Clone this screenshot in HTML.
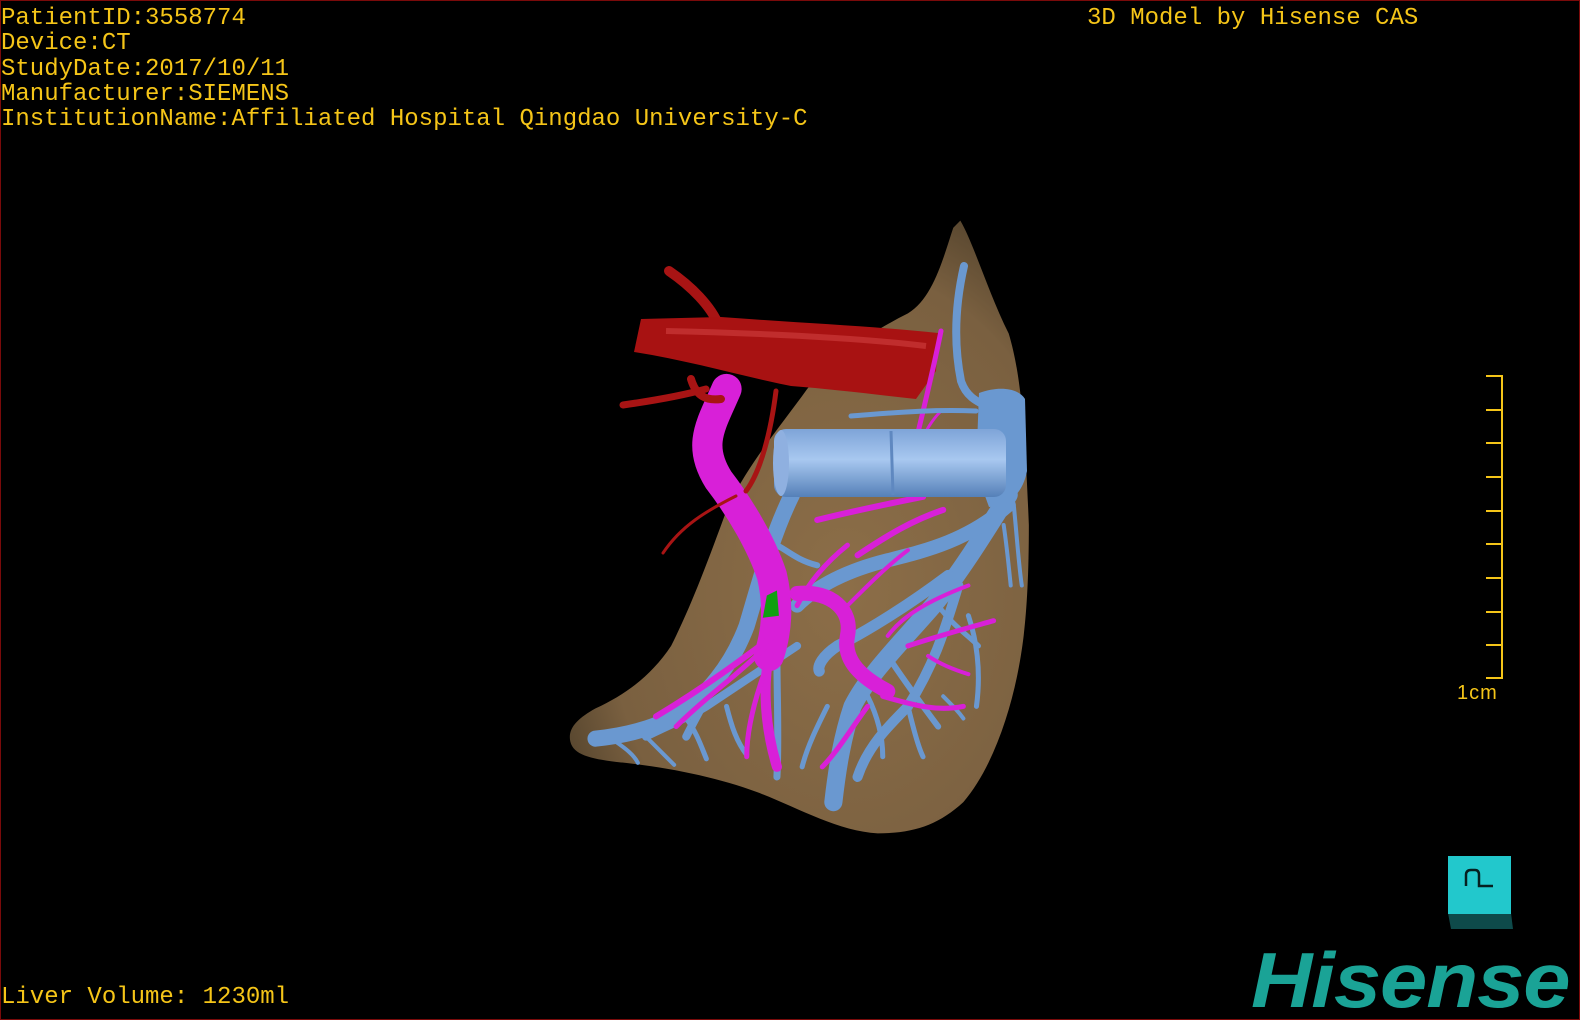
<!DOCTYPE html>
<html><head><meta charset="utf-8"><style>
html,body{margin:0;padding:0;background:#000;}
#root{position:relative;width:1578px;height:1018px;border:1px solid #7a0a0a;background:#000;overflow:hidden;}
.t{position:absolute;font-family:"Liberation Mono",monospace;font-size:24px;color:#f5c518;white-space:pre;line-height:25.3px;}
.tick{position:absolute;left:1485px;width:16px;height:2px;background:#f5c518;}
</style></head><body><div id="root">
<div class="t" style="left:0;top:5px;">PatientID:3558774
Device:CT
StudyDate:2017/10/11
Manufacturer:SIEMENS
InstitutionName:Affiliated Hospital Qingdao University-C</div>
<div class="t" style="left:1086px;top:5px;">3D Model by Hisense CAS</div>
<div class="t" style="left:0;top:984px;">Liver Volume: 1230ml</div>

<svg style="position:absolute;left:0;top:0" width="1580" height="1020">
<defs>
<radialGradient id="lv" cx="0.6" cy="0.6" r="0.65"><stop offset="0" stop-color="#8c6e48"/><stop offset="0.8" stop-color="#7a6040"/><stop offset="1" stop-color="#5a4830"/></radialGradient>
<linearGradient id="cy" x1="0" y1="0" x2="0" y2="1"><stop offset="0" stop-color="#7ea4d8"/><stop offset="0.45" stop-color="#a8c8f0"/><stop offset="1" stop-color="#5580b8"/></linearGradient>
</defs>
<g transform="scale(1.0077)">
<path d="M952,218 C965,240 980,290 1000,330 C1012,370 1016,420 1020,520 C1020,580 1017,620 1012,650 C1004,700 985,760 955,795 C930,818 905,826 870,826 C830,824 790,800 750,785 C710,770 660,760 610,755 C585,752 568,748 565,735 C562,722 572,712 590,702 C620,688 645,670 665,640 C685,600 700,560 722,500 C745,455 775,420 800,385 C825,355 860,330 900,310 C925,295 935,255 945,225 Z" fill="url(#lv)"/>
<g stroke="#6a98d0" fill="none" stroke-linecap="round" stroke-linejoin="round">
<path d="M785,490 C765,530 752,580 740,620 C725,660 700,690 670,710 C640,725 610,730 590,732" stroke-width="16"/>
<path d="M740,615 C720,660 700,690 680,730" stroke-width="8"/>
<path d="M1000,490 C975,530 950,570 925,600 C890,640 860,670 845,700 C835,730 830,760 826,795" stroke-width="18"/>
<path d="M1000,500 C960,535 920,545 880,555 C840,565 810,580 790,600" stroke-width="14"/>
<path d="M940,570 C900,600 860,625 830,640 C815,650 810,660 812,665" stroke-width="11"/>
<path d="M950,580 C935,630 925,660 900,700 C880,720 860,740 850,770" stroke-width="10"/>
<path d="M880,650 C900,680 915,700 930,720" stroke-width="6"/>
<path d="M810,560 C790,555 780,545 770,540" stroke-width="6"/>
<path d="M790,640 C760,660 730,680 700,700 C680,712 660,720 640,730" stroke-width="8"/>
<path d="M770,650 C770,690 772,730 770,770" stroke-width="7"/>
<path d="M720,700 C725,720 730,735 740,748" stroke-width="5"/>
<path d="M680,712 C690,725 695,740 700,752" stroke-width="5"/>
<path d="M640,730 C650,740 660,750 668,758" stroke-width="4"/>
<path d="M610,735 C620,742 628,748 632,756" stroke-width="4"/>
<path d="M860,690 C870,710 875,730 875,750" stroke-width="5"/>
<path d="M900,700 C905,720 910,740 915,750" stroke-width="5"/>
<path d="M960,610 C970,640 972,670 968,700" stroke-width="5"/>
<path d="M995,520 C998,540 1000,560 1002,580" stroke-width="4"/>
<path d="M1005,500 C1008,530 1010,560 1013,580" stroke-width="4"/>
<path d="M930,600 C945,620 960,630 970,640" stroke-width="5"/>
<path d="M820,700 C810,720 800,740 795,760" stroke-width="5"/>
<path d="M935,690 C945,700 950,705 955,712" stroke-width="4"/>
</g>
<g stroke="#d820d8" fill="none" stroke-linecap="round" stroke-linejoin="round">
<path d="M720,385 C705,420 690,440 712,475 C735,505 755,540 765,570 C772,600 770,625 762,650" stroke-width="30"/>
<path d="M762,650 C756,680 758,720 770,760" stroke-width="10"/>
<path d="M790,588 C825,585 845,605 840,630 C835,655 855,672 880,685" stroke-width="15"/>
<path d="M780,620 C740,650 700,680 650,710" stroke-width="6"/>
<path d="M760,640 C730,670 700,690 670,720" stroke-width="5"/>
<path d="M760,660 C745,700 740,730 740,750" stroke-width="5"/>
<path d="M790,600 C800,580 815,560 840,540" stroke-width="5"/>
<path d="M810,515 C850,505 885,498 915,492" stroke-width="6"/>
<path d="M850,550 C880,530 905,515 935,505" stroke-width="6"/>
<path d="M900,640 C930,630 960,622 985,615" stroke-width="5"/>
<path d="M875,690 C910,700 930,705 955,700" stroke-width="5"/>
<path d="M860,700 C845,720 830,745 815,760" stroke-width="5"/>
<path d="M880,630 C895,610 920,595 960,580" stroke-width="4"/>
<path d="M840,600 C860,580 880,560 900,545" stroke-width="4"/>
<path d="M920,650 C935,660 950,665 960,668" stroke-width="4"/>
</g>
<path d="M760,590 L770,585 L772,610 L756,612 Z" fill="#10a010"/>
</g>
<g stroke="#a81414" fill="none" stroke-linecap="round">
<path d="M668,270 C690,285 710,305 718,325" stroke-width="10"/>
<path d="M705,388 C680,395 650,400 622,404" stroke-width="7"/>
<path d="M775,390 C770,430 760,470 745,490" stroke-width="5"/>
<path d="M735,495 C705,510 680,525 662,552" stroke-width="3"/>
<path d="M690,378 C695,395 705,400 720,398" stroke-width="8"/>
</g>
<path d="M640,318 L720,316 C800,322 870,325 937,332 L935,370 L915,398 C870,393 830,388 790,385 C740,375 690,360 633,351 Z" fill="#a81212"/>
<path d="M665,330 C750,332 850,336 925,345" stroke="#d84848" stroke-width="6" fill="none" opacity="0.5"/>
<g stroke="#d820d8" fill="none" stroke-linecap="round">
<path d="M940,330 C932,370 922,410 915,440" stroke-width="5"/>
<path d="M940,410 C930,420 925,430 920,440" stroke-width="3"/>
</g>
<g stroke="#6a98d0" fill="none" stroke-linecap="round">
<path d="M963,265 C955,300 952,340 960,380 C965,395 975,400 985,405" stroke-width="8"/>
<path d="M850,415 C890,412 930,408 975,410" stroke-width="5"/>
</g>
<path d="M978,392 C1000,384 1018,388 1024,398 L1026,470 C1022,492 1008,505 988,506 L975,470 Z" fill="#6a98d0"/>
<rect x="773" y="428" width="232" height="68" rx="12" fill="url(#cy)"/>
<ellipse cx="780" cy="462" rx="8" ry="33" fill="#8fb0e0"/>
<path d="M890,430 L892,494" stroke="#5f88c0" stroke-width="3"/>
</svg>

<div style="position:absolute;left:1500px;top:374px;width:2px;height:304px;background:#f5c518"></div>
<div class="tick" style="top:374px"></div><div class="tick" style="top:408px"></div><div class="tick" style="top:441px"></div><div class="tick" style="top:475px"></div><div class="tick" style="top:509px"></div><div class="tick" style="top:542px"></div><div class="tick" style="top:576px"></div><div class="tick" style="top:610px"></div><div class="tick" style="top:643px"></div><div class="tick" style="top:676px"></div>
<div style="position:absolute;left:1456px;top:681px;font-family:'Liberation Sans',sans-serif;font-size:20px;color:#f5c518;letter-spacing:1px">1cm</div>

<svg style="position:absolute;left:1440px;top:850px" width="80" height="80">
<polygon points="7,62 70,62 72,78 10,78" fill="#0e4a4a"/>
<rect x="7" y="5" width="63" height="58" fill="#22c8cc"/>
<path d="M25,35 L25,24 Q25,19 30,19 L34,19 Q38,19 38,24 L38,35 L52,35" stroke="#062020" stroke-width="2.5" fill="none"/>
</svg>
<div style="position:absolute;left:1250px;top:934px;font-family:'Liberation Sans',sans-serif;font-weight:bold;font-style:italic;font-size:78px;color:#1aa396;transform:scaleX(1.09);transform-origin:left top;letter-spacing:-1px">Hisense</div>
</div></body></html>
